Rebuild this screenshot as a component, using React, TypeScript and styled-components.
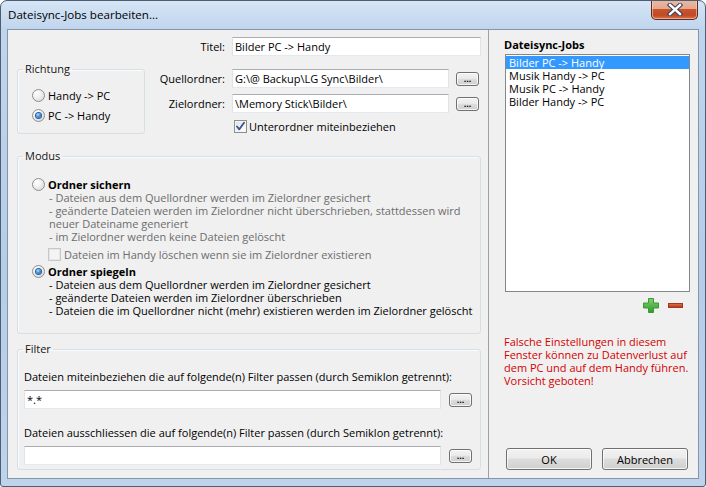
import React from 'react';
import styled, { createGlobalStyle } from 'styled-components';

const FONT = `"Open Sans", "Noto Sans", sans-serif`;

const Global = createGlobalStyle`
  html, body { margin: 0; padding: 0; background: #ffffff; }
  * { box-sizing: border-box; }
`;

const Window = styled.div`
  width: 706px;
  height: 487px;
  display: flex;
  flex-direction: column;
  border: 1px solid #4d5d72;
  border-radius: 7px 7px 3px 3px;
  background: linear-gradient(180deg, #d6e5f6 0px, #c0d5ed 28px, #b6cde8 55%, #bed3ec 100%);
  padding: 0 6px 7px 6px;
  font-family: ${FONT};
  font-size: 11px;
  color: #000;
  overflow: hidden;
`;

const TitleBar = styled.div`
  height: 28px;
  display: flex;
  justify-content: space-between;
  align-items: flex-start;
  flex: none;
`;

const TitleText = styled.div`
  padding: 6px 0 0 1px;
  line-height: 16px;
  font-size: 11.6px;
  color: #000;
`;

const CloseButton = styled.div`
  width: 47px;
  height: 20px;
  margin: -1px 1px 0 0;
  border: 1px solid #5c2a22;
  border-top: none;
  border-radius: 0 0 5px 5px;
  background: linear-gradient(180deg, #eab9a5 0%, #e4a98f 45%, #c9532c 50%, #c04a24 80%, #d8744c 100%);
  box-shadow: inset 0 0 0 1px rgba(255, 220, 200, 0.55);
  display: flex;
  align-items: center;
  justify-content: center;
`;

const Client = styled.div`
  flex: 1;
  display: flex;
  border: 1px solid #8595aa;
  background: #f0f0f0;
  min-height: 0;
`;

const LeftPanel = styled.div`
  width: 481px;
  flex: none;
  border-right: 1px solid #a0a0a0;
  padding: 7px 0 0 9px;
  display: flex;
  flex-direction: column;
`;

const TopGrid = styled.div`
  display: grid;
  grid-template-columns: 128px 87px 217px 32px;
  grid-template-rows: 19px 13px 19px 6px 19px 6px 15px;
`;

const FieldLabel = styled.label<{ $row: number }>`
  grid-column: 2;
  grid-row: ${(p) => p.$row};
  align-self: center;
  text-align: right;
  padding-right: 7px;
  line-height: 14px;
  white-space: nowrap;
`;

const TextBox = styled.input<{ $row?: number; $span?: boolean }>`
  grid-column: ${(p) => (p.$span ? '3 / span 2' : '3')};
  grid-row: ${(p) => p.$row ?? 'auto'};
  height: 19px;
  width: 100%;
  margin: 0;
  padding: 0 2px;
  font-family: ${FONT};
  font-size: 11px;
  color: #000;
  background: #fff;
  border: 1px solid #e2e3ea;
  border-top-color: #abadb3;
  border-bottom-color: #e3e9ef;
  outline: none;
`;

const FilterBox = styled(TextBox)`
  width: 417px;
  flex: none;
`;

const DotsButton = styled.button<{ $row?: number }>`
  grid-column: 4;
  grid-row: ${(p) => p.$row ?? 'auto'};
  align-self: center;
  justify-self: start;
  margin: 0 0 0 7px;
  width: 23px;
  height: 14px;
  padding: 0;
  border: 1px solid #707070;
  border-radius: 3px;
  background: linear-gradient(180deg, #f2f2f2 0%, #ebebeb 45%, #dddddd 50%, #cfcfcf 100%);
  box-shadow: inset 0 0 0 1px rgba(255, 255, 255, 0.75);
  font-family: ${FONT};
  font-size: 9px;
  font-weight: 700;
  line-height: 8px;
  color: #000;
  display: flex;
  align-items: flex-end;
  justify-content: center;
  padding-bottom: 2px;
`;

const InlineDots = styled(DotsButton)`
  margin-left: 8px;
  flex: none;
`;

const Group = styled.fieldset<{ $width: number; $gap?: number }>`
  margin: ${(p) => p.$gap ?? 0}px 0 0 0;
  padding: 0;
  width: ${(p) => p.$width}px;
  min-width: 0;
  border: 1px solid #d5dfe5;
  border-radius: 3px;
  box-shadow: inset 1px 1px 0 #fafbfc;
`;

const RichtungGroup = styled(Group)`
  grid-column: 1;
  grid-row: 2 / 8;
  margin-top: 6px;
`;

const Legend = styled.legend`
  margin-left: 5px;
  padding: 0 2px;
  line-height: 14px;
  font-size: 11px;
  color: #151515;
`;

const RichtungBody = styled.div`
  padding: 13px 0 11px 14px;
  display: flex;
  flex-direction: column;
  gap: 7px;
`;

const OptionRow = styled.div<{ $indent?: number; $top?: number; $bold?: boolean; $muted?: boolean }>`
  display: flex;
  align-items: center;
  height: 13px;
  line-height: 13px;
  margin-left: ${(p) => p.$indent ?? 0}px;
  margin-top: ${(p) => p.$top ?? 0}px;
  font-weight: ${(p) => (p.$bold ? 700 : 400)};
  color: ${(p) => (p.$muted ? '#6d6d6d' : '#000')};
  white-space: nowrap;
`;

const RadioCircle = styled.span<{ $checked?: boolean }>`
  width: 13px;
  height: 13px;
  flex: none;
  margin-right: 3px;
  border-radius: 50%;
  border: 1px solid #8e8f8f;
  background: radial-gradient(circle at 35% 30%, #ffffff 0%, #f3f3f3 35%, #d2d2d2 100%);
  display: inline-flex;
  align-items: center;
  justify-content: center;
  &::after {
    content: '';
    display: ${(p) => (p.$checked ? 'block' : 'none')};
    width: 5px;
    height: 5px;
    border-radius: 50%;
    background: radial-gradient(circle at 40% 35%, #b4e2ff 0%, #3b95e0 45%, #0f4f94 100%);
    box-shadow: 0 0 0 1px #2a5d98;
  }
`;

const CheckSquare = styled.span<{ $disabled?: boolean }>`
  width: 13px;
  height: 13px;
  flex: none;
  margin-right: ${(p) => (p.$disabled ? 3 : 2)}px;
  border: 1px solid ${(p) => (p.$disabled ? '#c7c7c7' : '#8e8f8f')};
  background: ${(p) =>
    p.$disabled
      ? '#f4f4f4'
      : 'linear-gradient(135deg, #dcdcdc 0%, #f2f2f2 45%, #ffffff 100%)'};
  box-shadow: inset 0 0 0 1px ${(p) => (p.$disabled ? '#e6e6e6' : '#f4f4f4')};
  display: inline-flex;
  align-items: center;
  justify-content: center;
`;

const CheckRow = styled.div`
  grid-column: 3 / span 2;
  grid-row: 7;
  display: flex;
  align-items: center;
  padding-left: 2px;
  line-height: 14px;
`;

const ModusBody = styled.div`
  padding: 15px 0 16px 14px;
  display: flex;
  flex-direction: column;
`;

const Desc = styled.div<{ $muted?: boolean }>`
  margin-left: 17px;
  line-height: 13px;
  white-space: nowrap;
  color: ${(p) => (p.$muted ? '#6d6d6d' : '#000')};
`;

const FilterBody = styled.div`
  padding: 14px 0 4px 6px;
  display: flex;
  flex-direction: column;
`;

const FilterLabel = styled.div<{ $top?: number }>`
  line-height: 14px;
  margin-top: ${(p) => p.$top ?? 0}px;
  white-space: nowrap;
`;

const FilterRow = styled.div`
  display: flex;
  align-items: center;
  margin-top: 6px;
`;

const RightPanel = styled.div`
  flex: 1;
  display: flex;
  flex-direction: column;
  padding: 8px 8px 8px 15px;
`;

const JobsLabel = styled.div`
  font-weight: 700;
  line-height: 14px;
`;

const ListBox = styled.div`
  margin-top: 2px;
  margin-left: 1px;
  height: 238px;
  border: 1px solid #828790;
  background: #fff;
  padding-top: 1px;
`;

const ListItem = styled.div<{ $selected?: boolean }>`
  height: 13px;
  line-height: 13px;
  padding-left: 3px;
  white-space: nowrap;
  background: ${(p) => (p.$selected ? '#3399ff' : 'transparent')};
  color: ${(p) => (p.$selected ? '#fff' : '#000')};
`;

const IconRow = styled.div`
  display: flex;
  justify-content: flex-end;
  gap: 9px;
  margin-top: 6px;
  padding-right: 7px;
`;

const Warning = styled.div`
  margin-top: 22px;
  color: #d40000;
  line-height: 13px;
  white-space: nowrap;
`;

const ButtonRow = styled.div`
  margin-top: auto;
  display: flex;
  gap: 10px;
  padding-left: 2px;
`;

const DialogButton = styled.button`
  width: 86px;
  height: 22px;
  margin: 0;
  padding: 0;
  border: 1px solid #707070;
  border-radius: 3px;
  background: linear-gradient(180deg, #f2f2f2 0%, #ebebeb 45%, #dddddd 50%, #cfcfcf 100%);
  box-shadow: inset 0 0 0 1px rgba(255, 255, 255, 0.75);
  font-family: ${FONT};
  font-size: 11px;
  color: #000;
`;

const CheckMark = () => (
  <svg width="11" height="11" viewBox="0 0 11 11">
    <path d="M2 5.5 L4.3 8.3 L9 1.8" fill="none" stroke="#3b5691" strokeWidth="1.9" strokeLinejoin="round" strokeLinecap="round" />
  </svg>
);

const CloseX = () => (
  <svg width="16" height="13" viewBox="0 0 16 13">
    <path d="M3 2 L13 11 M13 2 L3 11" stroke="#2f3f57" strokeWidth="4.4" strokeLinecap="square" />
    <path d="M3 2 L13 11 M13 2 L3 11" stroke="#ffffff" strokeWidth="2.4" strokeLinecap="square" />
  </svg>
);

const PlusIcon = () => (
  <svg width="16" height="15" viewBox="0 0 16 15">
    <defs>
      <linearGradient id="pg" x1="0" y1="0" x2="0" y2="1">
        <stop offset="0" stopColor="#7fd36b" />
        <stop offset="1" stopColor="#2f9a2a" />
      </linearGradient>
    </defs>
    <path d="M5.5 0.5 H10.5 V5 H15.5 V10 H10.5 V14.5 H5.5 V10 H0.5 V5 H5.5 Z" fill="url(#pg)" stroke="#3a9a35" strokeWidth="1" />
  </svg>
);

const MinusIcon = () => (
  <svg width="15" height="15" viewBox="0 0 15 15">
    <defs>
      <linearGradient id="mg" x1="0" y1="0" x2="0" y2="1">
        <stop offset="0" stopColor="#e0764a" />
        <stop offset="1" stopColor="#b0341a" />
      </linearGradient>
    </defs>
    <rect x="0.5" y="5.5" width="14" height="4" fill="url(#mg)" stroke="#a8361c" strokeWidth="1" />
  </svg>
);

const jobs = ['Bilder PC -> Handy', 'Musik Handy -> PC', 'Musik PC -> Handy', 'Bilder Handy -> PC'];

export default function App() {
  return (
    <>
      <Global />
      <Window>
        <TitleBar>
          <TitleText>Dateisync-Jobs bearbeiten...</TitleText>
          <CloseButton>
            <CloseX />
          </CloseButton>
        </TitleBar>
        <Client>
          <LeftPanel>
            <TopGrid>
              <FieldLabel $row={1}>Titel:</FieldLabel>
              <TextBox $row={1} $span readOnly defaultValue="Bilder PC -> Handy" />
              <RichtungGroup $width={128}>
                <Legend>Richtung</Legend>
                <RichtungBody>
                  <OptionRow>
                    <RadioCircle />
                    Handy -&gt; PC
                  </OptionRow>
                  <OptionRow>
                    <RadioCircle $checked />
                    PC -&gt; Handy
                  </OptionRow>
                </RichtungBody>
              </RichtungGroup>
              <FieldLabel $row={3}>Quellordner:</FieldLabel>
              <TextBox $row={3} readOnly defaultValue="G:\@ Backup\LG Sync\Bilder\" />
              <DotsButton $row={3}>...</DotsButton>
              <FieldLabel $row={5}>Zielordner:</FieldLabel>
              <TextBox $row={5} readOnly defaultValue="\Memory Stick\Bilder\" />
              <DotsButton $row={5}>...</DotsButton>
              <CheckRow>
                <CheckSquare>
                  <CheckMark />
                </CheckSquare>
                Unterordner miteinbeziehen
              </CheckRow>
            </TopGrid>

            <Group $width={464} $gap={15}>
              <Legend>Modus</Legend>
              <ModusBody>
                <OptionRow $bold>
                  <RadioCircle />
                  Ordner sichern
                </OptionRow>
                <Desc $muted>- Dateien aus dem Quellordner werden im Zielordner gesichert</Desc>
                <Desc $muted>
                  - geänderte Dateien werden im Zielordner nicht überschrieben, stattdessen wird
                  <br />
                  neuer Dateiname generiert
                </Desc>
                <Desc $muted>- im Zielordner werden keine Dateien gelöscht</Desc>
                <OptionRow $indent={16} $top={5} $muted>
                  <CheckSquare $disabled />
                  Dateien im Handy löschen wenn sie im Zielordner existieren
                </OptionRow>
                <OptionRow $bold $top={4}>
                  <RadioCircle $checked />
                  Ordner spiegeln
                </OptionRow>
                <Desc>- Dateien aus dem Quellordner werden im Zielordner gesichert</Desc>
                <Desc>- geänderte Dateien werden im Zielordner überschrieben</Desc>
                <Desc>- Dateien die im Quellordner nicht (mehr) existieren werden im Zielordner gelöscht</Desc>
              </ModusBody>
            </Group>

            <Group $width={464} $gap={8}>
              <Legend>Filter</Legend>
              <FilterBody>
                <FilterLabel>
                  Dateien miteinbeziehen die auf folgende(n) Filter passen (durch Semiklon getrennt):
                </FilterLabel>
                <FilterRow>
                  <FilterBox readOnly defaultValue="*.*" />
                  <InlineDots>...</InlineDots>
                </FilterRow>
                <FilterLabel $top={17}>
                  Dateien ausschliessen die auf folgende(n) Filter passen (durch Semiklon getrennt):
                </FilterLabel>
                <FilterRow>
                  <FilterBox readOnly defaultValue="" />
                  <InlineDots>...</InlineDots>
                </FilterRow>
              </FilterBody>
            </Group>
          </LeftPanel>

          <RightPanel>
            <JobsLabel>Dateisync-Jobs</JobsLabel>
            <ListBox>
              {jobs.map((j, i) => (
                <ListItem key={j} $selected={i === 0}>
                  {j}
                </ListItem>
              ))}
            </ListBox>
            <IconRow>
              <PlusIcon />
              <MinusIcon />
            </IconRow>
            <Warning>
              Falsche Einstellungen in diesem
              <br />
              Fenster können zu Datenverlust auf
              <br />
              dem PC und auf dem Handy führen.
              <br />
              Vorsicht geboten!
            </Warning>
            <ButtonRow>
              <DialogButton>OK</DialogButton>
              <DialogButton>Abbrechen</DialogButton>
            </ButtonRow>
          </RightPanel>
        </Client>
      </Window>
    </>
  );
}
